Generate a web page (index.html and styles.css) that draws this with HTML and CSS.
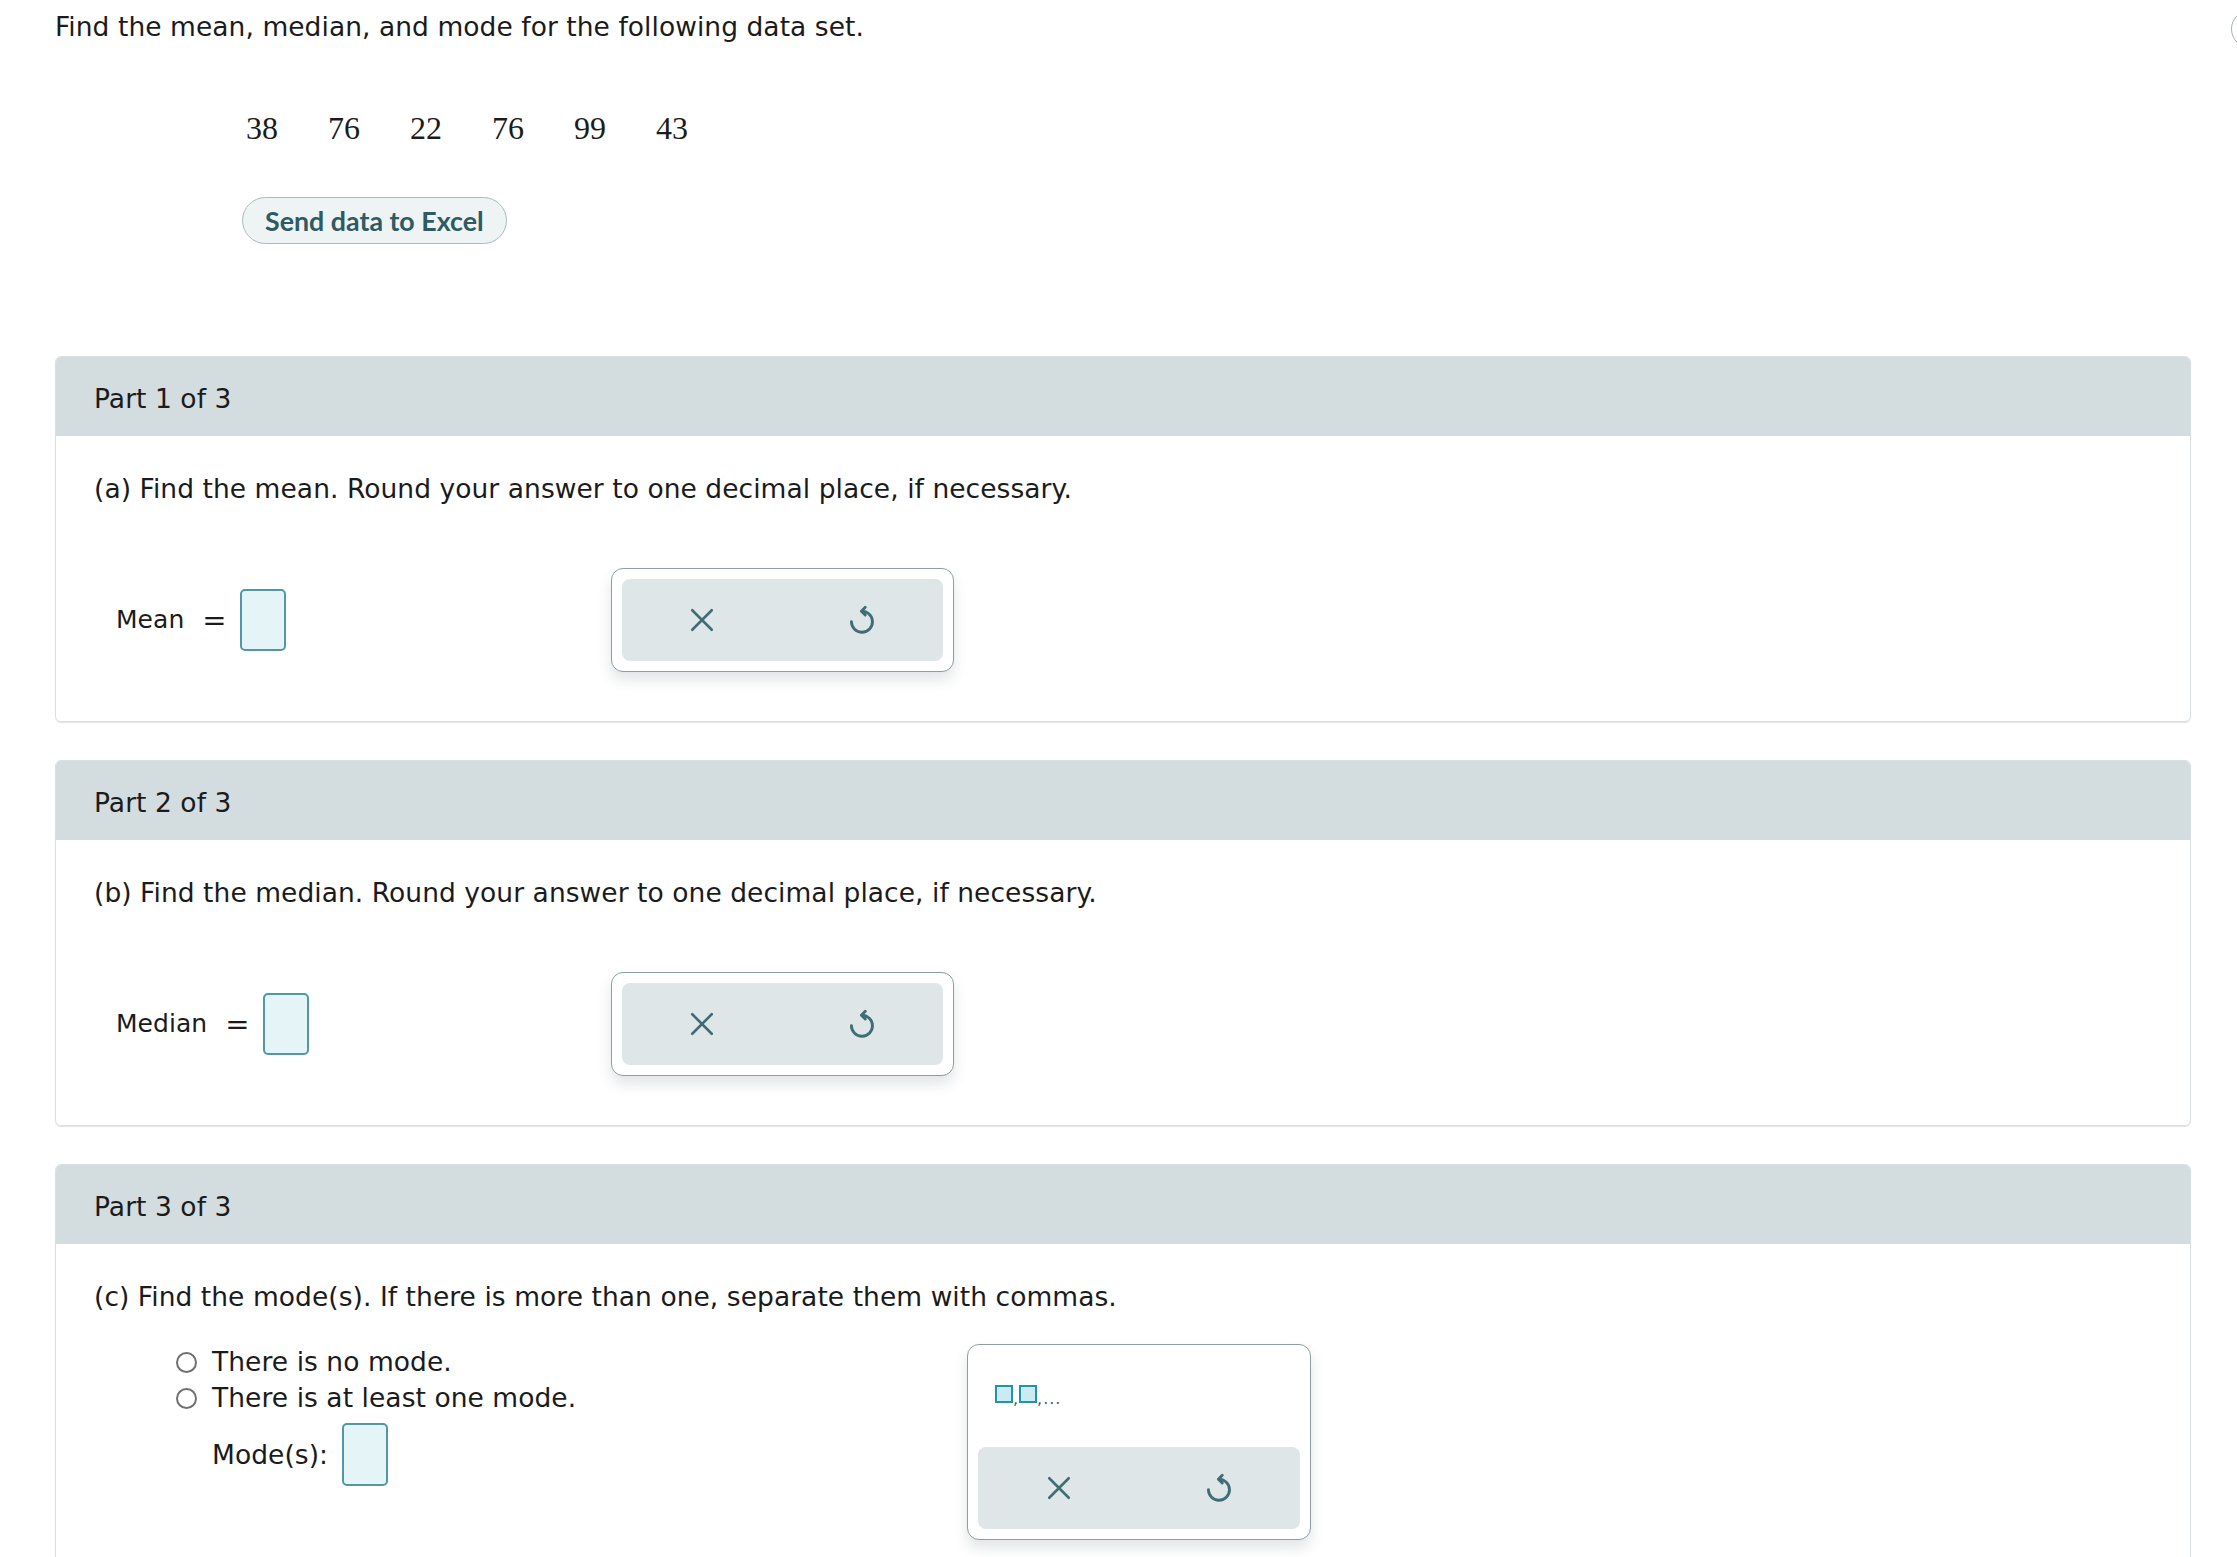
FILE: index.html
```html
<!DOCTYPE html>
<html lang="en">
<head>
  <meta charset="UTF-8" />
  <title>Mean, median and mode</title>
  <link rel="stylesheet" href="styles.css">
</head>
<body>
  <span class="help-btn"></span>
  <div class="page">
    <p class="prompt">Find the mean, median, and mode for the following data set.</p>
    <div class="data">
      <div class="data-row">
        <span>38</span><span>76</span><span>22</span><span>76</span><span>99</span><span>43</span>
      </div>
      <button type="button" class="excel-btn">Send data to Excel</button>
    </div>

    <section class="part">
      <div class="part-head">Part 1 of 3</div>
      <div class="part-body">
        <p class="question">(a) Find the mean. Round your answer to one decimal place, if necessary.</p>
        <div class="answer-row">
          <div class="answer">
            <span class="label">Mean</span><span class="eq">=</span><span class="box"></span>
          </div>
          <div class="keypad">
            <div class="keys">
              <button type="button" class="key"><svg class="ico-x" width="26" height="26" viewBox="0 0 24 24"><path d="M3 3 L21 21 M21 3 L3 21"/></svg></button>
              <button type="button" class="key"><svg class="ico-undo" width="27" height="31" viewBox="0 0 24 28"><path d="M11 6.5 A9.5 9.5 0 1 1 2 16 M14.5 3 L11 6.5 L14.5 10"/></svg></button>
            </div>
          </div>
        </div>
      </div>
    </section>

    <section class="part">
      <div class="part-head">Part 2 of 3</div>
      <div class="part-body">
        <p class="question">(b) Find the median. Round your answer to one decimal place, if necessary.</p>
        <div class="answer-row">
          <div class="answer">
            <span class="label">Median</span><span class="eq">=</span><span class="box"></span>
          </div>
          <div class="keypad">
            <div class="keys">
              <button type="button" class="key"><svg class="ico-x" width="26" height="26" viewBox="0 0 24 24"><path d="M3 3 L21 21 M21 3 L3 21"/></svg></button>
              <button type="button" class="key"><svg class="ico-undo" width="27" height="31" viewBox="0 0 24 28"><path d="M11 6.5 A9.5 9.5 0 1 1 2 16 M14.5 3 L11 6.5 L14.5 10"/></svg></button>
            </div>
          </div>
        </div>
      </div>
    </section>

    <section class="part part-last">
      <div class="part-head">Part 3 of 3</div>
      <div class="part-body">
        <p class="question">(c) Find the mode(s). If there is more than one, separate them with commas.</p>
        <div class="mode-row">
          <div class="choices">
            <label class="choice"><span class="radio"></span>There is no mode.</label>
            <label class="choice"><span class="radio"></span>There is at least one mode.</label>
            <div class="mode-answer"><span>Mode(s):</span><span class="box"></span></div>
          </div>
          <div class="keypad keypad-tall">
            <div class="templates">
              <span class="tpl"></span><span class="sep">,</span><span class="tpl"></span><span class="sep">,...</span>
            </div>
            <div class="keys">
              <button type="button" class="key"><svg class="ico-x" width="26" height="26" viewBox="0 0 24 24"><path d="M3 3 L21 21 M21 3 L3 21"/></svg></button>
              <button type="button" class="key"><svg class="ico-undo" width="27" height="31" viewBox="0 0 24 28"><path d="M11 6.5 A9.5 9.5 0 1 1 2 16 M14.5 3 L11 6.5 L14.5 10"/></svg></button>
            </div>
          </div>
        </div>
      </div>
    </section>
  </div>
</body>
</html>
```

FILE: styles.css
```css
html,
body {
  overflow-x: hidden;
}
body {
  margin: 0;
  font-family: "DejaVu Sans", Verdana, sans-serif;
  font-size: 26.5px;
  letter-spacing: 0.05px;
  line-height: 30px;
  color: #1b1b1b;
  background: #ffffff;
}
.page {
  padding: 12px 46px 0 55px;
}
.prompt {
  margin: 0;
}
.data {
  margin: 66px 0 0 187px;
}
.data-row {
  display: flex;
  gap: 50px;
  padding-left: 4px;
  font-family: "Liberation Serif", "Times New Roman", serif;
  font-size: 32px;
  line-height: 40px;
  letter-spacing: 0;
}
.excel-btn {
  margin-top: 49px;
  height: 47px;
  padding: 0 22px;
  border: 1px solid #a8bbbf;
  border-radius: 24px;
  background: #eef3f4;
  color: #2e5a64;
  font-family: Lato, "Open Sans", sans-serif;
  font-size: 26.8px;
  font-weight: 700;
  letter-spacing: 0;
  cursor: pointer;
}
.part {
  margin-top: 112px;
  border: 1px solid #d9e0e2;
  border-radius: 6px;
  box-shadow: 0 1px 1px rgba(0, 0, 0, 0.12);
}
.part + .part {
  margin-top: 38px;
}
.part-head {
  height: 79px;
  box-sizing: border-box;
  display: flex;
  align-items: center;
  padding: 4px 0 0 38px;
  background: #d3dcdf;
  border-radius: 5px 5px 0 0;
}
.part-body {
  padding: 38px 38px 49px;
}
.question {
  margin: 0;
}
.answer-row {
  display: grid;
  grid-template-columns: 495px auto;
  align-items: center;
  margin-top: 64px;
  padding-left: 22px;
}
.answer {
  display: flex;
  align-items: center;
  font-size: 25px;
}
.eq {
  margin: 0 13px 0 18px;
  font-size: 29px;
}
.box {
  display: inline-block;
  width: 46px;
  height: 62px;
  box-sizing: border-box;
  border: 2px solid #4f98a4;
  border-radius: 5px;
  background: #e5f4f7;
}
.keypad {
  width: 343px;
  box-sizing: border-box;
  padding: 10px;
  border: 1px solid #8c9ea3;
  border-radius: 12px;
  background: #ffffff;
  box-shadow: 0 8px 14px rgba(50, 70, 80, 0.14);
}
.keys {
  display: flex;
  height: 82px;
  border-radius: 8px;
  background: #dfe6e8;
}
.key {
  flex: 1;
  display: flex;
  align-items: center;
  justify-content: center;
  border: none;
  background: none;
  padding: 0;
  cursor: pointer;
}
.key svg {
  fill: none;
  stroke: #3f6d76;
  stroke-width: 2.4;
  stroke-linecap: round;
  stroke-linejoin: round;
}
.key .ico-undo {
  stroke-width: 2.6;
  margin-top: -2px;
}
.part-last .part-body {
  min-height: 400px;
}
.mode-row {
  display: grid;
  grid-template-columns: 791px 344px;
  margin-top: 32px;
  padding-left: 82px;
}
.choice {
  display: flex;
  align-items: center;
  line-height: 36px;
}
.radio {
  width: 21px;
  height: 21px;
  box-sizing: border-box;
  margin: 0 15px 0 0;
  border: 2px solid #6f6f6f;
  border-radius: 50%;
}
.mode-answer {
  display: flex;
  align-items: center;
  gap: 14px;
  margin: 7px 0 0 36px;
}
.mode-answer .box {
  width: 46px;
  height: 63px;
}
.keypad-tall {
  width: 344px;
  padding-top: 0;
}
.templates {
  display: flex;
  align-items: flex-start;
  height: 102px;
  box-sizing: border-box;
  padding: 40px 0 0 17px;
  color: #4a5a5e;
  font-size: 16px;
  line-height: 18px;
  letter-spacing: 0;
}
.tpl {
  width: 18px;
  height: 18px;
  box-sizing: border-box;
  border: 2.5px solid #1f95a8;
  background: #c9ebf1;
}
.sep {
  margin-top: 5px;
  letter-spacing: 1px;
}
.help-btn {
  position: absolute;
  top: 10px;
  left: 2231px;
  width: 36px;
  height: 36px;
  border: 1px solid #a9b1b4;
  border-radius: 50%;
}
```
